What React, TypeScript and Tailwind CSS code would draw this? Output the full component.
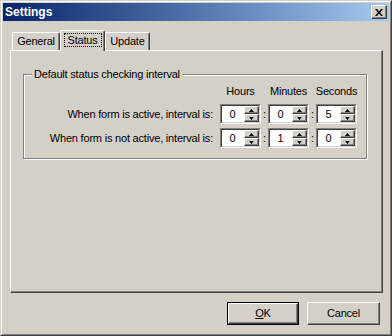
const face = 'bg-[#d4d0c8]';

function Raised({ className = '', children }: { className?: string; children?: React.ReactNode }) {
  return (
    <div
      className={`border border-t-white border-l-white border-r-[#404040] border-b-[#404040] shadow-[inset_-1px_-1px_0_#808080] ${face} ${className}`}
    >
      {children}
    </div>
  );
}

function Arrow({ down = false }: { down?: boolean }) {
  return (
    <svg width="5" height="3" viewBox="0 0 5 3" className="block">
      {down ? <path d="M0 0h5L2.5 3z" fill="#000" /> : <path d="M2.5 0L5 3H0z" fill="#000" />}
    </svg>
  );
}

function Spin({ value }: { value: string }) {
  return (
    <div className="flex h-[20px] w-[41px] border border-t-[#808080] border-l-[#808080] border-r-white border-b-white">
      <div className="flex flex-1 border border-t-[#404040] border-l-[#404040] border-r-[#d4d0c8] border-b-[#d4d0c8] bg-white">
        <div className="flex flex-1 items-center justify-center pr-[1px] leading-none">{value}</div>
        <div className="flex w-[15px] flex-col">
          <Raised className="flex h-[8px] items-center justify-center">
            <Arrow />
          </Raised>
          <Raised className="flex h-[8px] items-center justify-center">
            <Arrow down />
          </Raised>
        </div>
      </div>
    </div>
  );
}

function Tab({ label, active = false, w }: { label: string; active?: boolean; w: string }) {
  if (active) {
    return (
      <div
        className={`relative z-10 -mb-px flex h-[21px] ${w} items-start justify-center rounded-t-[2px] border-t border-l border-r border-t-white border-l-white border-r-[#404040] shadow-[inset_-1px_0_0_#808080] ${face} pt-[2px]`}
      >
        <span className="border border-dotted border-black px-[3px] leading-[12px]">{label}</span>
      </div>
    );
  }
  return (
    <div
      className={`flex h-[18px] ${w} items-center justify-center rounded-t-[2px] border-t border-l border-r border-t-white border-l-white border-r-[#404040] shadow-[inset_-1px_0_0_#808080] ${face} pb-[1px]`}
    >
      {label}
    </div>
  );
}

export default function App() {
  const rows = [
    { label: 'When form is active, interval is:', v: ['0', '0', '5'] },
    { label: 'When form is not active, interval is:', v: ['0', '1', '0'] },
  ];

  return (
    <div className="h-[336px] w-[392px] font-['Liberation_Sans',Arial,sans-serif] text-[11px] tracking-[-0.2px] text-black">
      <div className="flex h-full flex-col border border-t-[#d4d0c8] border-l-[#d4d0c8] border-r-[#404040] border-b-[#404040] bg-[#d4d0c8]">
        <div className="flex flex-1 flex-col border border-t-white border-l-white border-r-[#808080] border-b-[#808080] p-px">
          {/* title bar */}
          <div className="flex h-[18px] items-center bg-gradient-to-r from-[#0a246a] to-[#a6caf0] pl-[2px] pr-[2px]">
            <span className="flex-1 text-[12px] font-bold tracking-normal text-white">Settings</span>
            <Raised className="flex h-[14px] w-[16px] items-center justify-center">
              <svg width="8" height="7" viewBox="0 0 8 7">
                <path d="M0 0h2l2 2.5L6 0h2L5 3.5 8 7H6L4 4.5 2 7H0l3-3.5z" fill="#000" />
              </svg>
            </Raised>
          </div>

          {/* tab control */}
          <div className="mt-[9px] ml-[7px] mr-[6px] flex flex-col">
            <div className="flex h-[20px] items-end pl-[2px]">
              <Tab label="General" w="w-[48px]" />
              <Tab label="Status" w="w-[45px]" active />
              <Tab label="Update" w="w-[45px]" />
            </div>
            <div className="h-[243px] border border-t-white border-l-white border-r-[#404040] border-b-[#404040] shadow-[inset_-1px_-1px_0_#808080] pt-[23px] pl-[12px] pr-[13px]">
              <div className="relative w-[344px] border border-[#808080] shadow-[inset_1px_1px_0_#fff,1px_1px_0_#fff]">
                <span className={`absolute -top-[7px] left-[8px] ${face} px-[2px] leading-[13px]`}>
                  Default status checking interval
                </span>
                <div className="grid grid-cols-[1fr_41px_7px_41px_7px_41px] grid-rows-[15px_20px_20px] gap-y-[4px] pt-[10px] pr-[9px] pb-[10px]">
                  <div />
                  <div className="text-center leading-[13px]">Hours</div>
                  <div />
                  <div className="text-center leading-[13px]">Minutes</div>
                  <div />
                  <div className="-mx-[4px] text-center leading-[13px]">Seconds</div>
                  {rows.map((r) => (
                    <div key={r.label} className="contents">
                      <div className="flex items-center justify-end pr-[7px]">{r.label}</div>
                      <Spin value={r.v[0]} />
                      <div className="flex items-center justify-center">:</div>
                      <Spin value={r.v[1]} />
                      <div className="flex items-center justify-center">:</div>
                      <Spin value={r.v[2]} />
                    </div>
                  ))}
                </div>
              </div>
            </div>
          </div>

          {/* buttons */}
          <div className="mt-[9px] mr-[9px] flex justify-end gap-[8px]">
            <div className="h-[23px] w-[72px] border border-black">
              <Raised className="flex h-full items-center justify-center">
                <span>
                  <span className="underline">O</span>K
                </span>
              </Raised>
            </div>
            <Raised className="flex h-[23px] w-[73px] items-center justify-center">Cancel</Raised>
          </div>
        </div>
      </div>
    </div>
  );
}
